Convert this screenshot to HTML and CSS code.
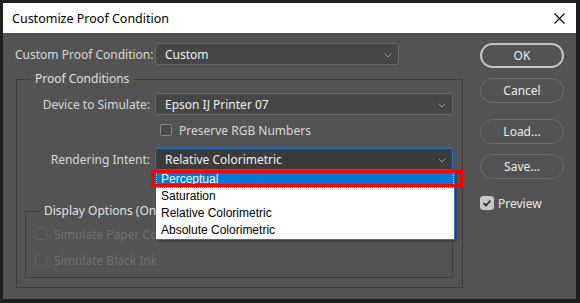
FILE: index.html
```html
<!DOCTYPE html>
<html>
<head>
  <title>Customize Proof Condition</title>
  <link rel="stylesheet" href="styles.css">
</head>
<body>
  <div class="window">
    <div class="titlebar">
      <span>Customize Proof Condition</span>
      <svg class="close" width="11" height="11" viewBox="0 0 11 11"><path d="M0.5 0.5L10.5 10.5M10.5 0.5L0.5 10.5" stroke="#000" stroke-width="1.1"/></svg>
    </div>

    <div class="content">
      <div class="main">
        <div class="row">
          <label class="lbl lbl-top">Custom Proof Condition:</label>
          <div class="select sel-top">Custom <svg class="chev" width="8" height="5" viewBox="0 0 8 5"><path d="M0.5 0.5L4 4L7.5 0.5" fill="none" stroke="#9a9a9a"/></svg></div>
        </div>

        <fieldset class="group">
          <legend>Proof Conditions</legend>

          <div class="row">
            <label class="lbl">Device to Simulate:</label>
            <div class="select">Epson IJ Printer 07 <svg class="chev" width="8" height="5" viewBox="0 0 8 5"><path d="M0.5 0.5L4 4L7.5 0.5" fill="none" stroke="#9a9a9a"/></svg></div>
          </div>

          <div class="check-row indent">
            <span class="box"></span>
            <span>Preserve RGB Numbers</span>
          </div>

          <div class="row row-intent">
            <label class="lbl">Rendering Intent:</label>
            <div class="select focus">Relative Colorimetric <svg class="chev" width="8" height="5" viewBox="0 0 8 5"><path d="M0.5 0.5L4 4L7.5 0.5" fill="none" stroke="#9a9a9a"/></svg>
              <ul class="dropdown">
                <li class="active">Perceptual</li>
                <li>Saturation</li>
                <li>Relative Colorimetric</li>
                <li>Absolute Colorimetric</li>
              </ul>
              <div class="mark"></div>
            </div>
          </div>

          <fieldset class="group inner">
            <legend>Display Options (On-Screen)</legend>
            <div class="check-row disabled">
              <span class="box"></span>
              <span>Simulate Paper Color</span>
            </div>
            <div class="check-row disabled second">
              <span class="box"></span>
              <span>Simulate Black Ink</span>
            </div>
          </fieldset>
        </fieldset>
      </div>

      <div class="side">
        <button class="btn default">OK</button>
        <button class="btn">Cancel</button>
        <button class="btn gap">Load...</button>
        <button class="btn">Save...</button>
        <div class="check-row preview">
          <span class="box checked"><svg width="10" height="8" viewBox="0 0 10 8"><path d="M1.5 4L4 6.5L8.5 1.5" fill="none" stroke="#2b2b2b" stroke-width="1.8"/></svg></span>
          <span>Preview</span>
        </div>
      </div>
    </div>
  </div>
</body>
</html>
```

FILE: styles.css
```css
body { margin: 0; background: #1f1f1f; font-family: "Noto Sans", sans-serif; font-size: 12px; color: #d8d8d8; }
.window { margin: 3px; width: 573px; height: 296px; background: #535353; }

.titlebar { height: 30px; background: #fff; color: #000; display: flex; align-items: center; justify-content: space-between; padding: 0 11px 0 9px; font-size: 12.5px; }
.close { margin-top: 1px; }

.content { display: flex; padding: 10px 12px 0 12px; }
.main { width: 448px; }
.side { margin-left: 17px; width: 84px; display: flex; flex-direction: column; }

.row { display: flex; align-items: center; }
.lbl { width: 125px; text-align: right; margin-right: 5px; white-space: nowrap; }
.lbl-top { width: 135px; }

.select { position: relative; flex: 1; height: 22px; box-sizing: border-box; border: 1px solid #666; border-radius: 3px; background: #464646; color: #f0f0f0; padding-left: 9px; display: flex; align-items: center; }
.sel-top { flex: none; width: 244px; }
.select.focus { border-color: #1d74d9; background: #3b3b3b; }
.chev { position: absolute; right: 6px; top: 9px; }

.group { margin: 6px 0 0 1px; border: 1px solid #3e3e3e; padding: 6px 9px 9px 8px; }
.group legend { margin-left: 6px; padding: 0 4px; line-height: 16px; color: #e0e0e0; }
.group.inner { margin: 33px 0 0 0; padding: 7px 0 9px 9px; }
.group.inner legend { margin-left: 5px; }

.check-row { display: flex; align-items: center; height: 16px; white-space: nowrap; }
.check-row.indent { margin: 7px 0 0 135px; }
.check-row .box { width: 12px; height: 12px; box-sizing: border-box; border: 1px solid #888; border-radius: 2px; background: #4a4a4a; margin-right: 7px; }
.check-row.disabled { color: #727272; }
.check-row.disabled .box { border-color: #5f5f5f; background: #505050; }
.check-row.second { margin-top: 10px; }

.row-intent { margin-top: 10px; }

.dropdown { position: absolute; left: 0; top: 21px; width: 299px; height: 70px; box-sizing: border-box; margin: 0; padding: 1px 0 0 0; list-style: none; background: #fff; border-right: 1px solid #1d74d9; border-bottom: 1px solid #1d74d9; box-shadow: 1px 1px 2px rgba(0,0,0,0.35); font-family: "Liberation Sans", sans-serif; color: #000; z-index: 2; }
.dropdown li { height: 17px; line-height: 17px; padding-left: 5px; }
.dropdown li.active { background: #0078d7; color: #fff; outline: 1px dotted #b8d8f5; outline-offset: -1px; }
.mark { position: absolute; left: -5px; top: 21px; width: 312px; height: 17px; box-sizing: border-box; border: 3px solid #ff0000; z-index: 3; }

.btn { height: 25px; border-radius: 13px; border: 1px solid #6e6e6e; background: transparent; color: #ececec; font: inherit; margin-bottom: 10px; padding: 0; }
.btn.default { border: 2px solid #c4c4c4; }
.btn.gap { margin-top: 6px; }

.check-row.preview { margin-top: 6px; color: #e8e8e8; }
.box.checked { width: 14px !important; height: 14px !important; background: #c8c8c8 !important; border-color: #c8c8c8 !important; border-radius: 3px !important; display: flex; align-items: center; justify-content: center; margin-right: 4px !important; }
```
